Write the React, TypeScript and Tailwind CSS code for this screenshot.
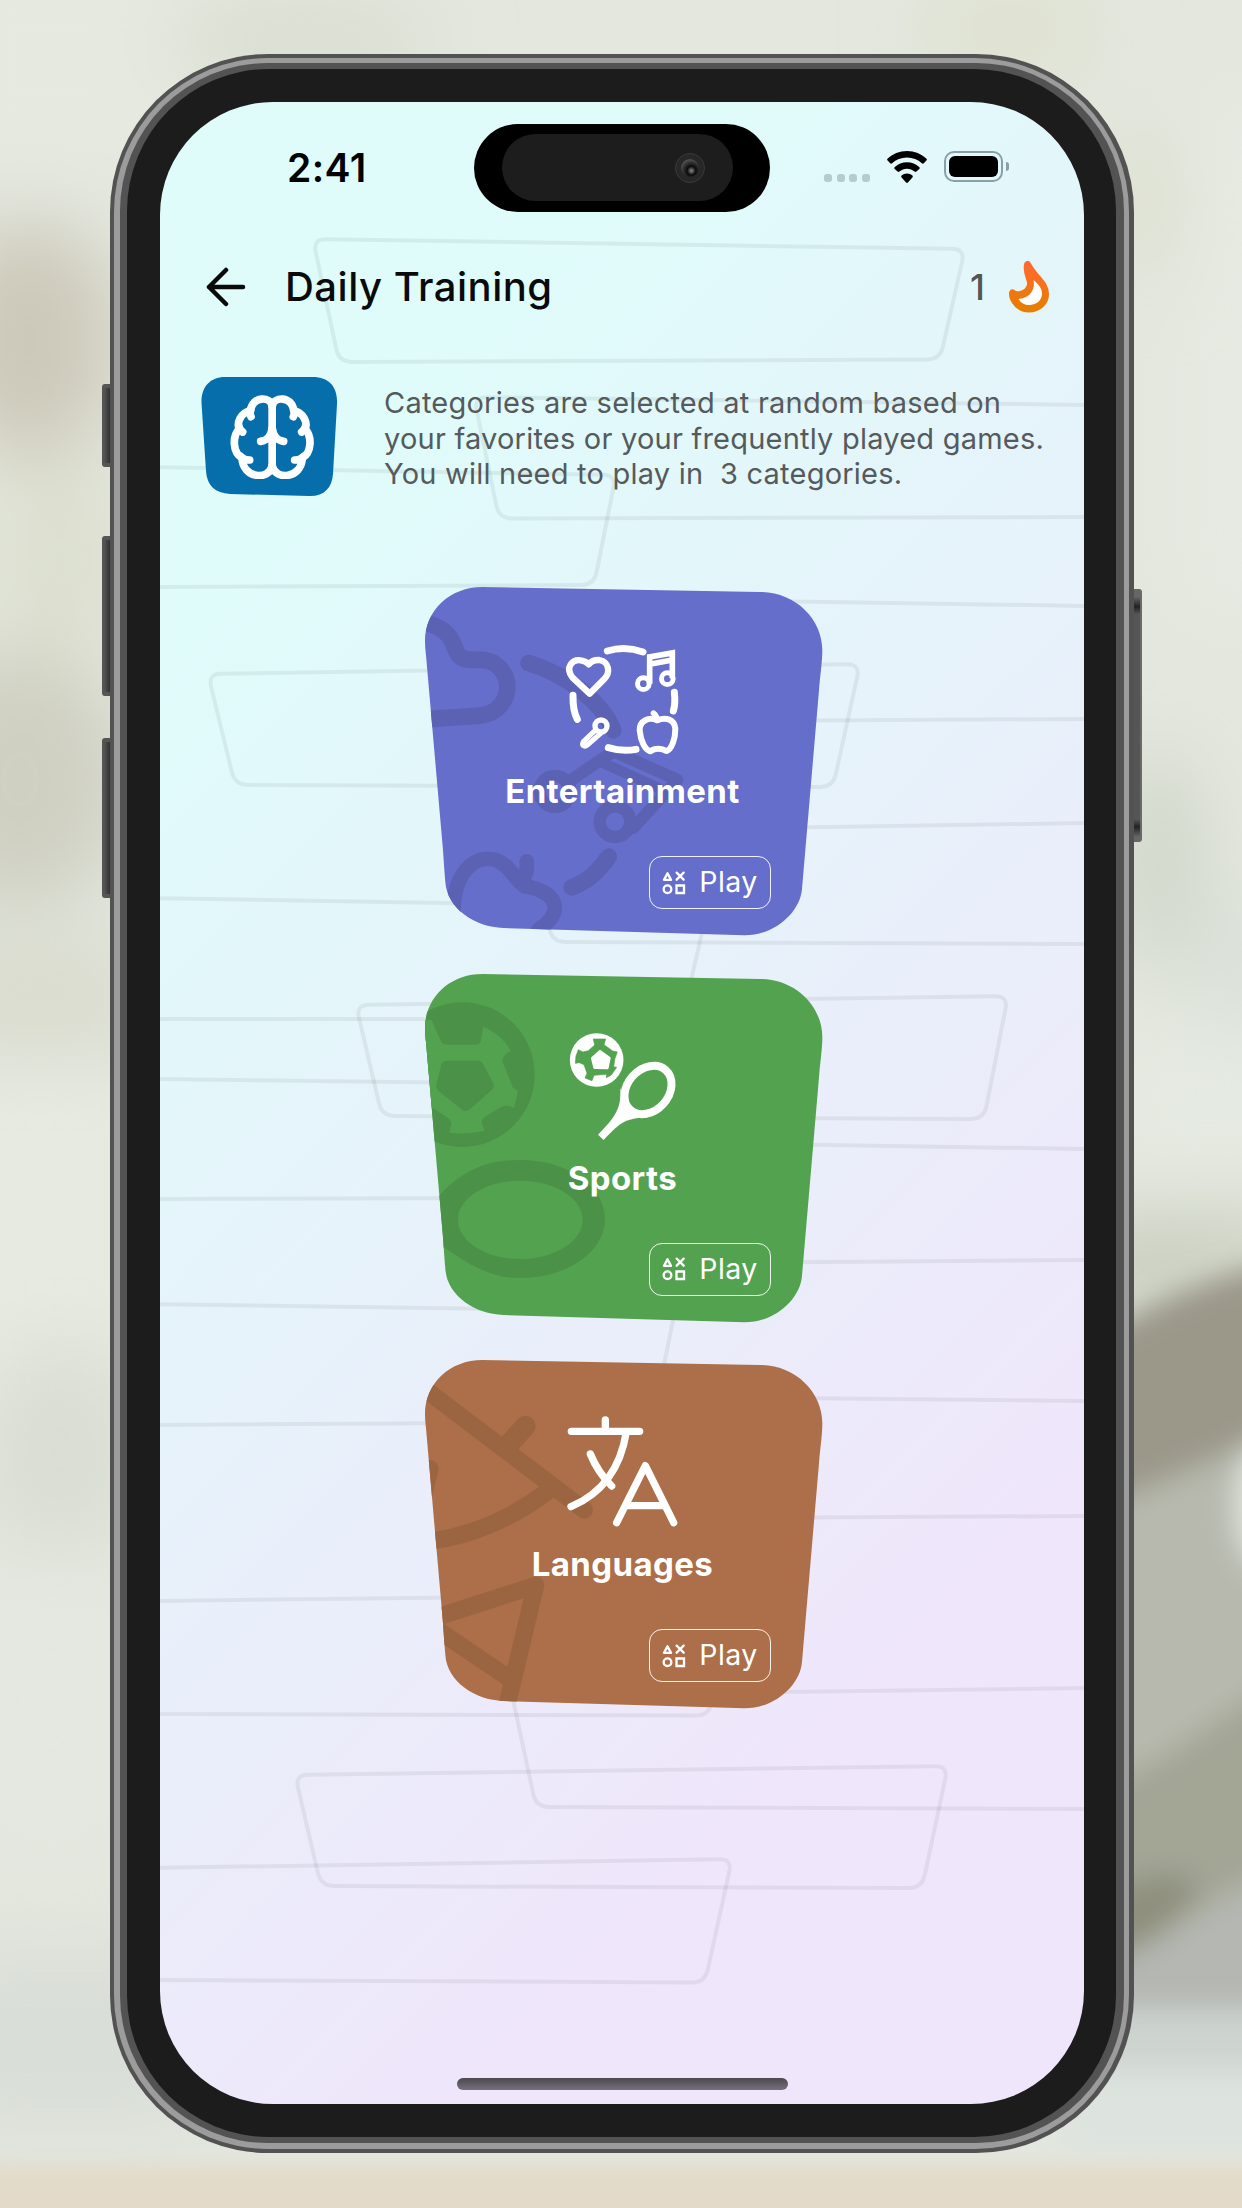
import React from "react";

type Point = [number, number];

/* Builds a path through the points with softened corners. */
function softPath(points: Point[], closed = false, radius = 13): string {
  const toward = (a: Point, b: Point): Point => {
    const length = Math.hypot(b[0] - a[0], b[1] - a[1]);
    const t = Math.min(radius, length / 2) / length;
    return [a[0] + (b[0] - a[0]) * t, a[1] + (b[1] - a[1]) * t];
  };
  const n = points.length;
  const parts: string[] = [];
  for (let i = 0; i < n; i++) {
    const p = points[i];
    const isEnd = !closed && (i === 0 || i === n - 1);
    if (isEnd) {
      parts.push(`${i === 0 ? "M" : "L"}${p[0]} ${p[1]}`);
      continue;
    }
    const before = toward(p, points[(i - 1 + n) % n]);
    const after = toward(p, points[(i + 1) % n]);
    parts.push(`${i === 0 ? "M" : "L"}${before[0]} ${before[1]}Q${p[0]} ${p[1]} ${after[0]} ${after[1]}`);
  }
  return parts.join("") + (closed ? "Z" : "");
}

const closedOutlines: Point[][] = [
  [[313, 239], [965, 249], [940, 359.5], [339, 362]],
  [[208, 674], [860, 664], [833, 787], [235, 785]],
  [[356, 1005], [1008, 996], [984, 1119], [382, 1116]],
  [[295, 1775], [948, 1766], [922, 1888], [321, 1886]],
];

const openOutlines: Point[][] = [
  [[1090, 405], [474, 397], [499, 518.5], [1090, 517]],
  [[150, 467], [616, 475], [594, 585], [150, 587]],
  [[700, 600], [1090, 606]],
  [[700, 721], [1090, 719]],
  [[700, 829], [1090, 823]],
  [[150, 898], [500, 904]],
  [[540, 880], [552, 942], [1090, 944]],
  [[706, 915], [690, 985]],
  [[150, 1019], [480, 1019]],
  [[150, 1079], [480, 1083]],
  [[700, 1143], [1090, 1149]],
  [[150, 1199], [500, 1198]],
  [[700, 1263], [1090, 1260]],
  [[150, 1304], [500, 1309]],
  [[675, 1310], [662, 1375]],
  [[150, 1425], [480, 1423]],
  [[700, 1397], [1090, 1401]],
  [[700, 1518], [1090, 1516]],
  [[150, 1601], [500, 1597]],
  [[700, 1693], [1090, 1688]],
  [[150, 1714], [709, 1715.5], [718, 1670]],
  [[511, 1690], [536, 1807], [1090, 1809]],
  [[150, 1868], [732, 1859], [705, 1982.5], [150, 1980]],
];

function ScreenPattern() {
  return (
    <svg className="absolute inset-0 size-full" viewBox="160 102 924 2002" fill="none" stroke="#000" strokeOpacity="0.06" strokeWidth="4">
      {closedOutlines.map((points, i) => (
        <path key={`c${i}`} d={softPath(points, true)} />
      ))}
      {openOutlines.map((points, i) => (
        <path key={`o${i}`} d={softPath(points)} />
      ))}
    </svg>
  );
}

function BlurredRoom() {
  return (
    <svg className="absolute inset-0 size-full" viewBox="0 0 1242 2208" preserveAspectRatio="none">
      <defs>
        <filter id="far" x="-100%" y="-100%" width="300%" height="300%"><feGaussianBlur stdDeviation="38" /></filter>
        <filter id="near" x="-100%" y="-100%" width="300%" height="300%"><feGaussianBlur stdDeviation="14" /></filter>
        <filter id="edge" x="-20%" y="-200%" width="140%" height="500%"><feGaussianBlur stdDeviation="9" /></filter>
      </defs>
      <rect width="1242" height="2208" fill="#e3e7de" />
      <g filter="url(#far)">
        <rect x="-80" y="-60" width="300" height="240" fill="#e6e9e0" />
        <ellipse cx="300" cy="40" rx="140" ry="50" fill="#dbdfd2" />
        <ellipse cx="30" cy="340" rx="90" ry="120" fill="#cdc9ba" />
        <ellipse cx="60" cy="560" rx="70" ry="110" fill="#dde0d0" />
        <ellipse cx="20" cy="780" rx="110" ry="130" fill="#cfd0c2" />
        <rect x="-60" y="940" width="200" height="120" fill="#dadccf" />
        <rect x="-60" y="1060" width="200" height="350" fill="#e6eae1" />
        <ellipse cx="60" cy="1450" rx="80" ry="110" fill="#d9ded3" />
        <ellipse cx="50" cy="1700" rx="120" ry="150" fill="#e4e8e1" />
        <rect x="-60" y="1950" width="260" height="180" fill="#d9ded8" />
        <ellipse cx="1010" cy="30" rx="90" ry="60" fill="#dfe2d1" />
        <ellipse cx="1150" cy="200" rx="30" ry="90" fill="#dcdfce" />
        <rect x="1180" y="100" width="140" height="520" fill="#e6eae2" />
        <ellipse cx="1160" cy="860" rx="40" ry="110" fill="#cfd5c8" />
        <rect x="1190" y="900" width="120" height="140" fill="#dce2da" />
        <rect x="1110" y="1030" width="200" height="140" fill="#e5eae2" />
        <path d="M1090 1220H1300V1260L1090 1330Z" fill="#c6ccbb" />
        <rect x="1100" y="2000" width="220" height="90" fill="#ced5d1" />
      </g>
      <g filter="url(#near)">
        <path d="M1080 1345C1160 1300 1200 1270 1320 1255V2000H1080Z" fill="#b7b9ae" />
        <path d="M1080 1345C1150 1305 1210 1270 1320 1252V1425C1240 1440 1190 1475 1080 1515Z" fill="#9b988a" />
        <path d="M1080 1790C1180 1765 1210 1710 1320 1660V1850C1240 1880 1190 1925 1080 1960Z" fill="#a3a595" />
        <ellipse cx="1130" cy="1918" rx="72" ry="30" transform="rotate(-28 1130 1918)" fill="#8e8f7d" />
        <ellipse cx="1262" cy="1505" rx="26" ry="62" fill="#e1e7de" />
        <path d="M1080 1985C1150 1955 1200 1905 1320 1870V2010H1080Z" fill="#b4b7b2" />
        <path d="M1060 2012H1320V2070H1060Z" fill="#cdd4d0" />
        <path d="M1060 2070H1320V2150H1060Z" fill="#dde3de" />
      </g>
      <rect x="-60" y="2165" width="1362" height="100" fill="#e3dac9" filter="url(#edge)" />
    </svg>
  );
}

function BrainIcon() {
  const half = (
    <>
      <path d="M244 128C240 98 184 98 180 142C148 148 138 180 146 196C124 220 126 268 154 284C156 346 236 352 244 308" />
      <path d="M179 138Q176 150 181 160" />
      <path d="M144 186Q146 199 156 206" />
      <path d="M151 280Q162 291 177 290" />
      <path d="M244 196Q240 230 210 234" />
    </>
  );
  return (
    <svg className="relative ml-[3px] h-[84px] w-[84px]" viewBox="119 95 250 252" fill="none" stroke="#fff" strokeWidth="23" strokeLinecap="round" strokeLinejoin="round">
      {half}
      <g transform="translate(489 0) scale(-1 1)">{half}</g>
      <path d="M244.500 125V312" />
    </svg>
  );
}

function FlameIcon() {
  return (
    <svg className="h-[54px] w-[43px]" viewBox="0 0 43 54" fill="none">
      <defs>
        <linearGradient id="flame" x1="0" y1="0" x2="0" y2="1">
          <stop offset="0.1" stopColor="#ff6b2c" />
          <stop offset="1" stopColor="#e67e00" />
        </linearGradient>
      </defs>
      <path d="M19.500 4.500C17 17 28 22 19 31.500C15 35 8 36 4.500 33C4 41 12 49 21 49C31 49 37.500 42 37.500 34C37.500 23 28 20 19.500 4.500Z" fill="url(#flame)" stroke="url(#flame)" strokeWidth="7" strokeLinejoin="round" />
      <path d="M25.500 20C27.500 28 23 38 10.500 39C13 43 16.500 45 21 45C29 45 34 40 34 33.500C34 28 30 24 25.500 20Z" fill="#fff" />
    </svg>
  );
}

function PlayIcon() {
  return (
    <svg className="h-[24px] w-[24px]" viewBox="792 906 72 72" fill="none" stroke="#fff" strokeWidth="7" strokeLinejoin="round" strokeLinecap="round">
      <path d="M808.500 913L798 932.500H819Z" />
      <path d="M836 911L857 932M857 911L836 932" />
      <circle cx="808.500" cy="960.500" r="11.500" />
      <path d="M835.500 949.500H858V972H835.500Z" strokeLinejoin="miter" />
    </svg>
  );
}

function EntertainmentIcon() {
  return (
    <svg className="h-[115px] w-[118px]" viewBox="489 217 354 345" fill="none" stroke="#fff" strokeWidth="21" strokeLinecap="round" strokeLinejoin="round">
      <path d="M622 244Q675 228 729 247" />
      <path d="M519 377Q518 422 532 449" />
      <path d="M823 368Q827 402 820 424" />
      <path d="M625 534Q668 547 708 539" />
      <path d="M569 372L517 323C494 292 518 268 542 272C556 274 562 279 566 284C572 277 582 270 598 271C628 276 632 310 612 329Z" strokeWidth="19" />
      <path d="M749 342V262L817 250V326M749 284L817 271" strokeWidth="17" strokeLinejoin="miter" strokeLinecap="butt" />
      <circle cx="730" cy="342" r="17.500" strokeWidth="15" />
      <circle cx="802" cy="327" r="17.500" strokeWidth="15" />
      <circle cx="603" cy="469" r="18" strokeWidth="16" />
      <path d="M588 480L550 516C542 530 556 532 562 526L602 491" strokeWidth="15" />
      <path d="M771 452C748 441 718 452 719 482C722 515 735 540 751 545C764 535 785 535 799 544C816 540 826 505 826 477C823 448 798 442 771 452Z" strokeWidth="18" />
      <path d="M760 430Q771 438 771 450" strokeWidth="16" />
    </svg>
  );
}

function SportsIcon() {
  return (
    <svg className="h-[115px] w-[118px]" viewBox="489 237 354 345">
      <circle cx="590" cy="330" r="80.500" fill="#fff" />
      <path d="M580 267L617 267L612 284L638 303L652 306L645 325L641 350L650 352L634 375L619 383L620 373L582 376L576 392L555 384L561 370L552 344L538 338L526 340L528 318L535 299L549 306L565 302L584 285Z" fill="#53a250" stroke="#53a250" strokeWidth="2" strokeLinejoin="round" />
      <path d="M600 304L628 324L622 354L584 353L577 325Z" fill="#fff" stroke="#fff" strokeWidth="8" strokeLinejoin="round" />
      <ellipse cx="744" cy="420" rx="80" ry="62" transform="rotate(-48 744 420)" fill="none" stroke="#fff" strokeWidth="24" />
      <path d="M661 415C664 470 650 499 594 554L611 570C655 524 672 502 742 503L692 476Z" fill="#fff" />
    </svg>
  );
}

function LanguagesIcon() {
  return (
    <svg className="h-[115px] w-[118px]" viewBox="489 227 354 345" fill="none" stroke="#fff" strokeWidth="22" strokeLinecap="round" strokeLinejoin="round">
      <path d="M616 242V276M514 276H719" />
      <path d="M679 278C665 365 622 456 513 502" />
      <path d="M571 344Q594 400 635 440" />
      <path d="M650 550L736 379L821 550M682 499H790" />
    </svg>
  );
}

const entertainmentDecor = (
  <g fill="none" stroke="#5b62b4" strokeWidth="50" strokeLinecap="round" strokeLinejoin="round" transform="translate(-75 -52)">
    <path d="M60 154C125 170 150 190 165 235C176 271 198 272 240 270C348 275 350 425 240 438L60 450" />
    <path d="M386 280C500 315 605 395 640 482" />
    <circle cx="465" cy="665" r="46" strokeWidth="38" />
    <circle cx="645" cy="756" r="46" strokeWidth="37" />
    <path d="M500 640L640 545L832 630L700 775" strokeWidth="36" />
    <path d="M610 580L780 658" strokeWidth="32" />
    <path d="M626 861C595 905 565 935 515 953" />
    <path d="M160 1030C160 905 230 850 290 872C335 890 345 935 375 950C475 965 495 1030 415 1080" strokeWidth="44" />
    <path d="M380 875Q384 910 366 932" strokeWidth="44" />
  </g>
);

const sportsDecor = (
  <g transform="translate(-75 -72)">
    <circle cx="187" cy="374" r="217" fill="#4b9148" />
    <path d="M95 210L122 272Q128 284 142 284H228Q240 284 243 270L250 230C285 245 315 270 333 303Q305 315 308 335L338 412L354 424L342 475Q325 462 305 470L255 500Q240 512 247 525L254 542Q200 554 148 549L154 520Q153 510 140 500L98 475L40 460V210Z" fill="#53a250" />
    <path d="M140 332H235Q245 333 250 343L280 400Q286 410 276 419L207 480Q197 487 187 480L115 422Q106 413 109 404L124 343Q128 333 140 332Z" fill="#4b9148" />
    <path fillRule="evenodd" d="M361 630C500 630 615 708 615 807S500 984 361 984C270 984 210 945 135 895L60 860V780L120 735C180 670 250 630 361 630ZM361 692C258 692 174 744 174 809S258 927 361 927S548 874 548 809S464 692 361 692Z" fill="#4b9148" />
  </g>
);

const languagesDecor = (
  <g fill="none" stroke="#9c6541" strokeWidth="52" strokeLinecap="round" strokeLinejoin="round" transform="translate(-75 -62)">
    <path d="M60 138L553 512" />
    <path d="M376 260L330 312" strokeWidth="62" />
    <path d="M440 458C345 530 220 590 90 605" />
    <path d="M90 388L70 470" />
    <path d="M90 840L407 738L318 1110M60 836L320 1012" />
  </g>
);

const CARD_SHAPE =
  "M0 163C0 70 75 0 172 0L1005 15C1110 15 1192 95 1192 190C1192 225 1185 270 1182 310L1131 905C1126 975 1050 1045 958 1045L235 1023C150 1020 66 965 61 885C58 850 56 820 54 790L3 205Q0 185 0 163Z";

interface CategoryCardProps {
  id: string;
  title: string;
  color: string;
  decor: React.ReactNode;
  icon: React.ReactNode;
}

function CategoryCard({ id, title, color, decor, icon }: CategoryCardProps) {
  return (
    <article className="relative flex h-[349px] w-[398px] flex-col items-center pt-[55px]">
      <svg className="absolute inset-0 size-full" viewBox="0 0 1194 1047">
        <clipPath id={id}>
          <path d={CARD_SHAPE} />
        </clipPath>
        <path d={CARD_SHAPE} fill={color} />
        <g clipPath={`url(#${id})`}>{decor}</g>
      </svg>
      <div className="relative mr-[4px]">{icon}</div>
      <h2 className="relative mt-[14px] mr-[3px] text-[33px] leading-[40px] font-bold tracking-[0.4px] text-white">{title}</h2>
      <button className="relative mt-[45px] mr-[52px] flex h-[53px] w-[122px] items-center justify-center gap-[13px] self-end rounded-[13px] border-[1.5px] border-white/90 text-[28.500px] leading-none tracking-[0.4px] text-white">
        <PlayIcon />
        <span>Play</span>
      </button>
    </article>
  );
}

function StatusBar() {
  return (
    <div className="relative flex h-[88px] items-center">
      <span className="mb-[2px] ml-[127px] w-[187px] text-[39px] leading-none font-semibold tracking-[0.4px] text-black">2:41</span>
      <div className="flex h-[88px] w-[296px] items-center rounded-full bg-black pl-[28px]">
        <div className="mb-px flex h-[67px] w-[231px] items-center justify-end rounded-full bg-[#1d1d1d] pr-[28px]">
          <div className="flex size-[30px] items-center justify-center rounded-full border border-[#3a3a3a] bg-[#272727]">
            <div className="size-[18px] rounded-full bg-[radial-gradient(circle_at_58%_65%,#8a8a8a_0%,#0a0a0a_28%,#555_75%,#2a2a2a_100%)]" />
          </div>
        </div>
      </div>
      <div className="mt-[19px] ml-[54px] flex gap-[4.500px]">
        {[0, 1, 2, 3].map((dot) => (
          <span key={dot} className="size-[8px] rounded-[3px] bg-[#b5cbcd]" />
        ))}
      </div>
      <svg className="mb-px ml-[17px] h-[34px] w-[40px]" viewBox="0 0 40 34" fill="#000">
        <path d="M20 0C27.500 0 34.500 3 39.300 7.600C40 8.300 40 9 39.400 9.600L36.800 12.200C36.200 12.800 35.500 12.800 34.900 12.200C31 8.600 25.700 6.500 20 6.500S9 8.600 5.100 12.200C4.500 12.800 3.800 12.800 3.200 12.200L.6 9.600C0 9 0 8.300 .7 7.600C5.500 3 12.500 0 20 0Z" />
        <path d="M20 11.200C24.700 11.200 29 13 32.200 15.900C32.900 16.600 32.900 17.300 32.300 17.900L29.400 20.600C28.800 21.200 28.200 21.100 27.600 20.600C25.500 18.800 22.900 17.700 20 17.700S14.500 18.800 12.400 20.600C11.800 21.100 11.200 21.200 10.600 20.600L7.700 17.900C7.100 17.300 7.100 16.600 7.800 15.900C11 13 15.300 11.200 20 11.200Z" />
        <path d="M20 22.500C22.100 22.500 24 23.300 25.400 24.600C26 25.200 26 25.800 25.400 26.400L20.900 31.600C20.300 32.200 19.700 32.200 19.100 31.600L14.600 26.400C14 25.800 14 25.200 14.600 24.600C16 23.300 17.900 22.500 20 22.500Z" />
      </svg>
      <div className="mb-[3px] ml-[17px] flex items-center gap-[3px]">
        <div className="h-[31px] w-[59px] rounded-[10px] border-2 border-[#8ba0a5] p-[3px]">
          <div className="size-full rounded-[6px] bg-black" />
        </div>
        <div className="h-[9px] w-[3px] rounded-r-full bg-[#8ba0a5]" />
      </div>
    </div>
  );
}

function Screen() {
  return (
    <main className="relative flex h-[2002px] w-[924px] flex-col overflow-hidden rounded-[113px] bg-[linear-gradient(135deg,#dffcfa_17%,#e7f2fa_47%,#efe6fb_78%)] pt-[22px] font-['Inter',sans-serif]">
      <ScreenPattern />
      <StatusBar />
      <header className="relative mt-[45px] flex h-[60px] items-center pr-[33px] pl-[46px]">
        <svg className="h-[40px] w-[40px]" viewBox="0 0 40 40" fill="none" stroke="#0a0a0a" strokeWidth="4.500" strokeLinecap="round" strokeLinejoin="round">
          <path d="M37 20H3M20 3L3 20L20 37" />
        </svg>
        <h1 className="ml-[39px] text-[40px] leading-none font-medium tracking-[0.5px] text-[#0a0a0a]">Daily Training</h1>
        <span className="ml-auto text-[36px] leading-none font-medium text-[#555]">1</span>
        <span className="ml-[23px]">
          <FlameIcon />
        </span>
      </header>
      <section className="relative mt-[59px] flex pl-[41px]">
        <div className="relative flex h-[121px] w-[138px] items-center justify-center">
          <svg className="absolute inset-0 size-full" viewBox="0 0 138 121">
            <path d="M24 1H112C128 1 137 11 136 28L132 98C131 112 123 120.500 108 120L29 118C14 117 6 110 5 95L.5 27C0 11 9 1 24 1Z" fill="#066fab" />
          </svg>
          <BrainIcon />
        </div>
        <p className="mt-[9px] ml-[45px] text-[29px] leading-[35.500px] font-normal tracking-[0.22px] whitespace-pre text-[#555a5c]">
          {"Categories are selected at random based on\nyour favorites or your frequently played games.\nYou will need to play in  3 categories."}
        </p>
      </section>
      <section className="relative mt-[90px] ml-[265px] flex flex-col gap-[37.600px]">
        <CategoryCard id="entertainment" title="Entertainment" color="#656eca" decor={entertainmentDecor} icon={<EntertainmentIcon />} />
        <CategoryCard id="sports" title="Sports" color="#53a250" decor={sportsDecor} icon={<SportsIcon />} />
        <CategoryCard id="languages" title="Languages" color="#ac6f49" decor={languagesDecor} icon={<LanguagesIcon />} />
      </section>
      <div className="relative mt-auto mb-[14px] ml-[297px] h-[12px] w-[331px] rounded-full bg-linear-to-b from-[#4b4850] to-[#77717e]" />
    </main>
  );
}

function LeftButton({ className }: { className: string }) {
  return (
    <div className={`absolute left-[102px] w-[10px] rounded-l-[3px] border-y-4 border-l-2 border-[#555] bg-linear-to-r from-[#555] to-[#262626] ${className}`} />
  );
}

export default function App() {
  return (
    <div className="relative h-[2208px] w-[1242px] overflow-hidden pt-[54px] pl-[110px]">
      <BlurredRoom />
      <LeftButton className="top-[384px] h-[83px]" />
      <LeftButton className="top-[536px] h-[160px]" />
      <LeftButton className="top-[738px] h-[160px]" />
      <div className="absolute top-[589px] left-[1132px] h-[253px] w-[10px] rounded-r-[3px] border-r-2 border-[#6a6a6a] bg-[linear-gradient(180deg,#666_0%,#666_3%,#222_7%,#555_10%,#555_91%,#222_94%,#666_98%)]" />
      <div className="relative w-[1024px] rounded-[158px] bg-[#525252] pt-[4px] pr-[5px] pb-[4px] pl-[4px]">
        <div className="rounded-[154px] bg-[#9c9c9c] pt-[5px] pr-[5px] pb-[6px] pl-[6px]">
          <div className="rounded-[148px] bg-[#535353] pt-[6px] pr-[8px] pb-[6px] pl-[7px]">
            <div className="rounded-[142px] bg-[#1c1c1c] pt-[33px] pr-[32px] pb-[33px] pl-[33px]">
              <Screen />
            </div>
          </div>
        </div>
      </div>
    </div>
  );
}
